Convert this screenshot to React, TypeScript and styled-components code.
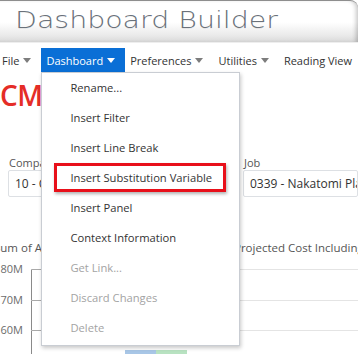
import React from "react";
import styled, { createGlobalStyle, css } from "styled-components";

const GlobalStyle = createGlobalStyle`
  html, body {
    margin: 0;
    padding: 0;
    background: #ffffff;
  }
  body {
    font-family: "Open Sans", "Noto Sans", Arial, sans-serif;
    overflow: hidden;
  }
`;

const Page = styled.div`
  width: 358px;
  height: 354px;
  overflow: hidden;
  position: relative;
  background: #ffffff;
`;

// Header band with the product title
const Header = styled.header`
  height: 43px;
  padding: 5px 0 0 15px;
  box-sizing: border-box;
  border-top: 1px solid #8e8e8e;
  border-bottom: 1px solid #eeeeee;
  border-top-right-radius: 8px;
  background: linear-gradient(to bottom, #ffffff 0%, #ffffff 52%, #e9e9e9 85%, #d9d9d9 100%);
  box-shadow: inset -4px 0 4px -2px rgba(0, 0, 0, 0.22);
`;

const Title = styled.h1`
  margin: 0;
  font-family: "DejaVu Sans", Verdana, sans-serif;
  font-weight: 300;
  font-size: 23.5px;
  line-height: 28px;
  color: #6a717a;
  white-space: nowrap;
  transform: scaleX(1.21);
  transform-origin: left center;
  text-shadow: 0 1px 0 rgba(0, 0, 0, 0.06);
`;

// Top menu bar
const MenuBar = styled.nav`
  display: flex;
  align-items: stretch;
  height: 24px;
  margin: 5px 0 0 -3px;
  font-size: 11px;
  color: #333333;
`;

const Tab = styled.div<{ $active?: boolean }>`
  position: relative;
  display: flex;
  align-items: center;
  gap: 4px;
  padding: 0 10px 0 5px;
  white-space: nowrap;
  ${(p) =>
    p.$active &&
    css`
      background: #0a6fd6;
      color: #ffffff;
    `}
`;

const Caret = styled.span<{ $light?: boolean }>`
  width: 0;
  height: 0;
  border-left: 4px solid transparent;
  border-right: 4px solid transparent;
  border-top: 5px solid ${(p) => (p.$light ? "#ffffff" : "#7d7d7d")};
  margin-top: 1px;
`;

const Dropdown = styled.ul`
  position: absolute;
  top: 100%;
  left: 0;
  z-index: 10;
  width: 199px;
  margin: 0;
  padding: 0 0 2px;
  list-style: none;
  box-sizing: border-box;
  background: #ffffff;
  border: 1px solid #c9cdd3;
  box-shadow: 1px 2px 4px rgba(0, 0, 0, 0.22);
  color: #333333;
`;

const DropItem = styled.li<{ $disabled?: boolean; $marked?: boolean }>`
  position: relative;
  height: 30px;
  line-height: 30px;
  padding-left: 28px;
  font-size: 11.2px;
  color: ${(p) => (p.$disabled ? "#a3a3a3" : "#333333")};
  ${(p) =>
    p.$marked &&
    css`
      &::after {
        content: "";
        position: absolute;
        top: 0;
        bottom: 1px;
        left: 12px;
        right: 13px;
        border: 3px solid #e8101a;
        box-shadow: 1px 2px 3px rgba(0, 0, 0, 0.3);
      }
    `}
`;

// Dashboard content behind the menu
const Content = styled.main`
  display: flex;
  flex-direction: column;
`;

const Brand = styled.div`
  margin-top: 9px;
  font-size: 28px;
  font-weight: 600;
  line-height: 28px;
  color: #e52d27;
  letter-spacing: -0.5px;
`;

const FilterRow = styled.div`
  display: grid;
  grid-template-columns: 227px 1fr;
  column-gap: 8px;
  margin-top: 46px;
  padding-left: 8px;
`;

const Field = styled.div`
  display: flex;
  flex-direction: column;
  min-width: 0;
`;

const FieldLabel = styled.label`
  font-size: 11px;
  line-height: 15px;
  color: #555555;
  padding-left: 1px;
`;

const FieldBox = styled.div`
  height: 27px;
  box-sizing: border-box;
  border: 1px solid #dde0e4;
  border-radius: 2px;
  padding: 0 6px;
  display: flex;
  align-items: center;
  font-size: 12px;
  color: #333333;
  white-space: nowrap;
  overflow: hidden;
  width: 100%;
  margin-right: -40px;
`;

const ChartTitles = styled.div`
  display: grid;
  grid-template-columns: 240px 1fr;
  margin: 43px 0 0 -6px;
  font-size: 11.5px;
  line-height: 15px;
  color: #555555;
  white-space: nowrap;
`;

const ChartTitle = styled.div`
  overflow: hidden;
`;

const Chart = styled.div`
  margin-top: 14px;
  display: flex;
  flex-direction: column;
`;

const AxisRow = styled.div<{ $h: number }>`
  display: flex;
  height: ${(p) => p.$h}px;
`;

const AxisLabel = styled.div`
  width: 31px;
  box-sizing: border-box;
  padding-right: 8px;
  margin-top: -7px;
  line-height: 14px;
  font-size: 11px;
  color: #6c6c6c;
  text-align: right;
`;

const PlotCell = styled.div`
  position: relative;
  flex: 1;
  border-left: 1px solid #8a8a8a;
  border-top: 1px solid #e4e4e4;
  display: flex;
  align-items: flex-end;
  padding-left: 93px;

  &::before {
    content: "";
    position: absolute;
    top: -1px;
    left: 0;
    width: 9px;
    border-top: 1px solid #a9a9a9;
  }
`;

const Bar = styled.div<{ $color: string }>`
  width: 31px;
  height: 12px;
  margin-bottom: -2px;
  background: ${(p) => p.$color};
`;

const menuItems = [
  { label: "Rename..." },
  { label: "Insert Filter" },
  { label: "Insert Line Break" },
  { label: "Insert Substitution Variable", marked: true },
  { label: "Insert Panel" },
  { label: "Context Information" },
  { label: "Get Link...", disabled: true },
  { label: "Discard Changes", disabled: true },
  { label: "Delete", disabled: true },
];

const axis = [
  { label: "80M", h: 31 },
  { label: "70M", h: 30 },
  { label: "60M", h: 30, bars: true },
];

export default function App() {
  return (
    <Page>
      <GlobalStyle />
      <Header>
        <Title>Dashboard Builder</Title>
      </Header>

      <MenuBar>
        <Tab>
          File <Caret />
        </Tab>
        <Tab $active>
          Dashboard <Caret $light />
          <Dropdown>
            {menuItems.map((item) => (
              <DropItem key={item.label} $disabled={item.disabled} $marked={item.marked}>
                {item.label}
              </DropItem>
            ))}
          </Dropdown>
        </Tab>
        <Tab>
          Preferences <Caret />
        </Tab>
        <Tab>
          Utilities <Caret />
        </Tab>
        <Tab>Reading View</Tab>
      </MenuBar>

      <Content>
        <Brand>CMiC</Brand>

        <FilterRow>
          <Field>
            <FieldLabel>Company</FieldLabel>
            <FieldBox>10 - CMiC Construction</FieldBox>
          </Field>
          <Field>
            <FieldLabel>Job</FieldLabel>
            <FieldBox>0339 - Nakatomi Plaza Tower</FieldBox>
          </Field>
        </FilterRow>

        <ChartTitles>
          <ChartTitle>Sum of Actual Cost</ChartTitle>
          <ChartTitle>Projected Cost Including Commitments</ChartTitle>
        </ChartTitles>

        <Chart>
          {axis.map((row) => (
            <AxisRow key={row.label} $h={row.h}>
              <AxisLabel>{row.label}</AxisLabel>
              <PlotCell>
                {row.bars && (
                  <>
                    <Bar $color="#a8c6e6" />
                    <Bar $color="#b8e2c1" />
                  </>
                )}
              </PlotCell>
            </AxisRow>
          ))}
        </Chart>
      </Content>
    </Page>
  );
}
